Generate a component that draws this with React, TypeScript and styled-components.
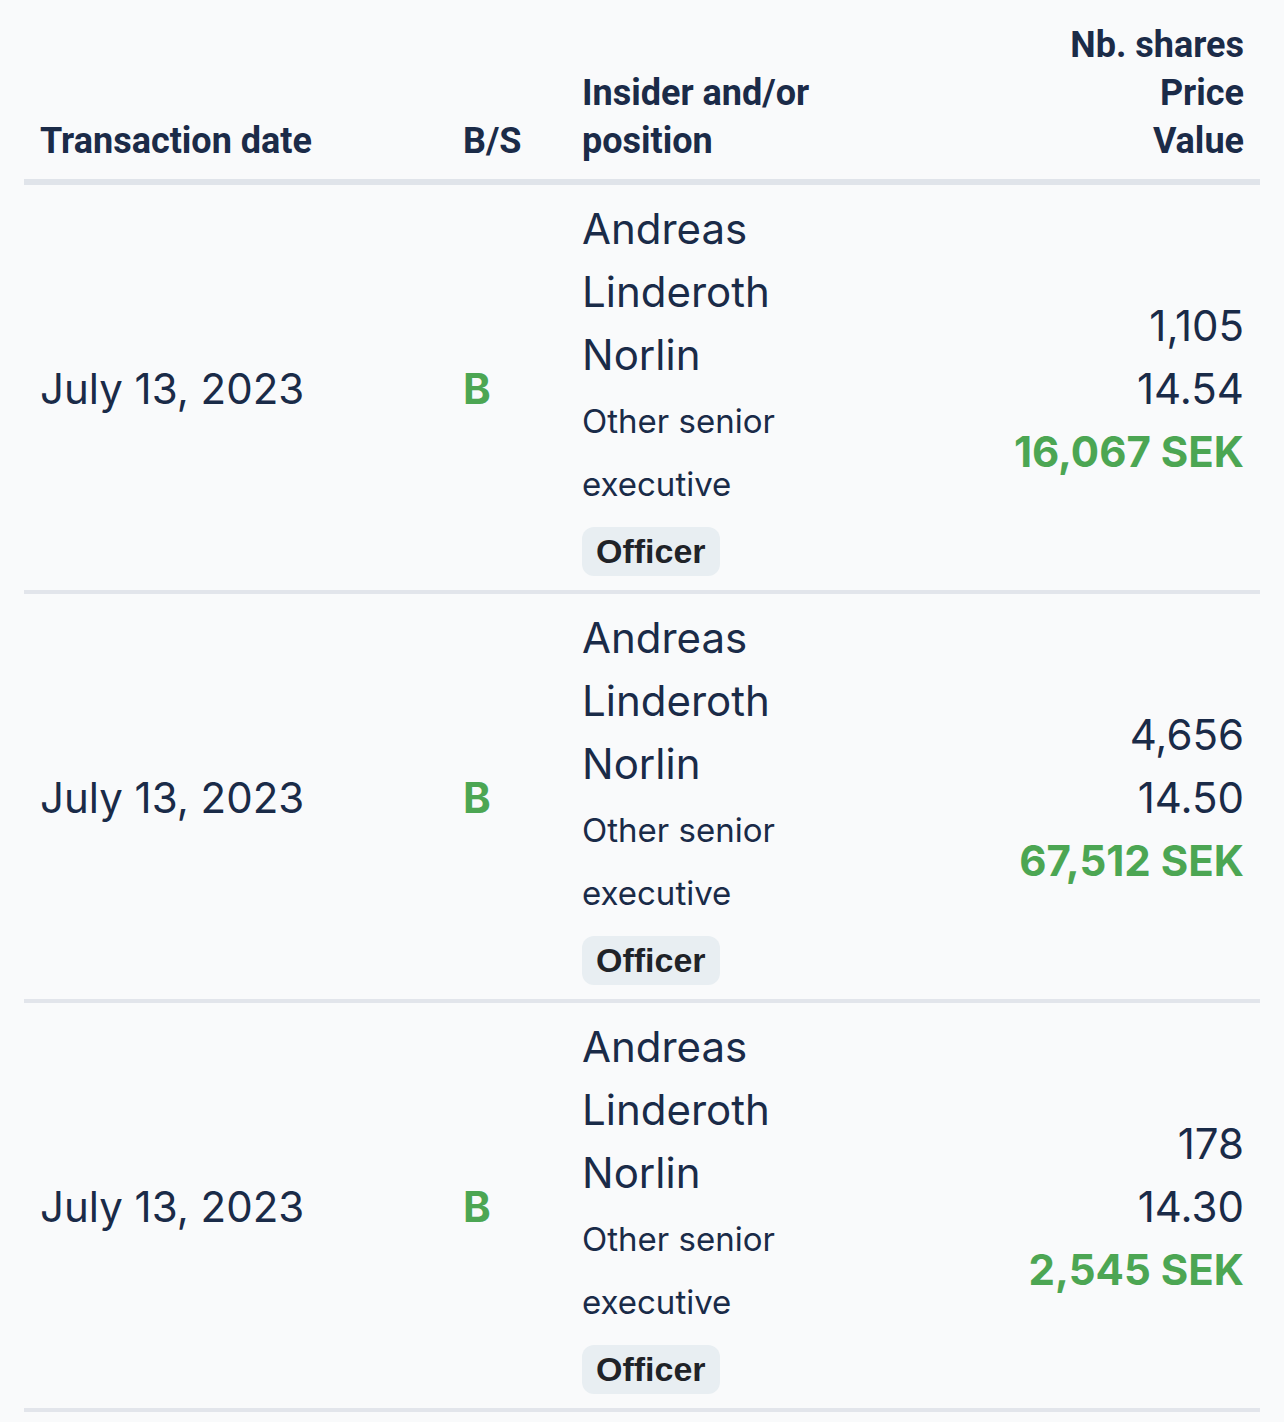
import React from "react";
import styled, { createGlobalStyle } from "styled-components";

const GlobalStyle = createGlobalStyle`
  html, body {
    margin: 0;
    padding: 0;
    background: #f9fafb;
  }
  body {
    font-family: Inter, "Noto Sans", sans-serif;
    color: #1a2b48;
  }
`;

const Page = styled.div`
  padding: 0 24px;
  background: #f9fafb;
  min-height: 1422px;
  box-sizing: border-box;
`;

const Table = styled.table`
  width: 100%;
  border-collapse: collapse;
  table-layout: fixed;
`;

const HeadCell = styled.th<{ $align?: "left" | "right" }>`
  font-family: Roboto, "Liberation Sans", sans-serif;
  font-weight: 700;
  font-size: 36px;
  line-height: 48px;
  color: #1b2b48;
  text-align: ${(p) => p.$align ?? "left"};
  vertical-align: bottom;
  padding: 21px 16px 14px;
  border-bottom: 6px solid #e0e4ea;
`;

const Row = styled.tr`
  border-bottom: 4px solid #e2e5eb;
`;

const Cell = styled.td<{ $align?: "left" | "right" }>`
  vertical-align: middle;
  text-align: ${(p) => p.$align ?? "left"};
  padding: 12px 16px 11px;
  font-size: 42px;
  line-height: 63px;
  color: #1a2b48;
`;

const Side = styled.span`
  font-weight: 700;
  color: #4ca653;
`;

const Name = styled.div`
  font-size: 42px;
  line-height: 63px;
`;

const Position = styled.div`
  font-size: 33px;
  line-height: 63px;
  padding-top: 4px;
`;

const Badge = styled.span`
  display: inline-block;
  margin-top: 10px;
  padding: 6px 14px;
  background: #e8eef2;
  border-radius: 12px;
  font-family: "Liberation Sans", Arial, sans-serif;
  font-weight: 700;
  font-size: 34px;
  line-height: 37px;
  color: #1f2328;
`;

const Figure = styled.div<{ $value?: boolean }>`
  font-weight: ${(p) => (p.$value ? 700 : 400)};
  color: ${(p) => (p.$value ? "#4ca653" : "#1a2b48")};
`;

type Tx = {
  date: string;
  side: string;
  name: string;
  position: string;
  role: string;
  shares: string;
  price: string;
  value: string;
};

const rows: Tx[] = [
  {
    date: "July 13, 2023",
    side: "B",
    name: "Andreas Linderoth Norlin",
    position: "Other senior executive",
    role: "Officer",
    shares: "1,105",
    price: "14.54",
    value: "16,067 SEK",
  },
  {
    date: "July 13, 2023",
    side: "B",
    name: "Andreas Linderoth Norlin",
    position: "Other senior executive",
    role: "Officer",
    shares: "4,656",
    price: "14.50",
    value: "67,512 SEK",
  },
  {
    date: "July 13, 2023",
    side: "B",
    name: "Andreas Linderoth Norlin",
    position: "Other senior executive",
    role: "Officer",
    shares: "178",
    price: "14.30",
    value: "2,545 SEK",
  },
];

export default function App() {
  return (
    <>
      <GlobalStyle />
      <Page>
        <Table>
          <colgroup>
            <col style={{ width: 423 }} />
            <col style={{ width: 119 }} />
            <col style={{ width: 300 }} />
            <col />
          </colgroup>
          <thead>
            <tr>
              <HeadCell>Transaction date</HeadCell>
              <HeadCell>B/S</HeadCell>
              <HeadCell>Insider and/or position</HeadCell>
              <HeadCell $align="right">
                Nb. shares
                <br />
                Price
                <br />
                Value
              </HeadCell>
            </tr>
          </thead>
          <tbody>
            {rows.map((r, i) => (
              <Row key={i}>
                <Cell>{r.date}</Cell>
                <Cell>
                  <Side>{r.side}</Side>
                </Cell>
                <Cell>
                  <Name>{r.name}</Name>
                  <Position>{r.position}</Position>
                  <Badge>{r.role}</Badge>
                </Cell>
                <Cell $align="right">
                  <Figure>{r.shares}</Figure>
                  <Figure>{r.price}</Figure>
                  <Figure $value>{r.value}</Figure>
                </Cell>
              </Row>
            ))}
          </tbody>
        </Table>
      </Page>
    </>
  );
}
